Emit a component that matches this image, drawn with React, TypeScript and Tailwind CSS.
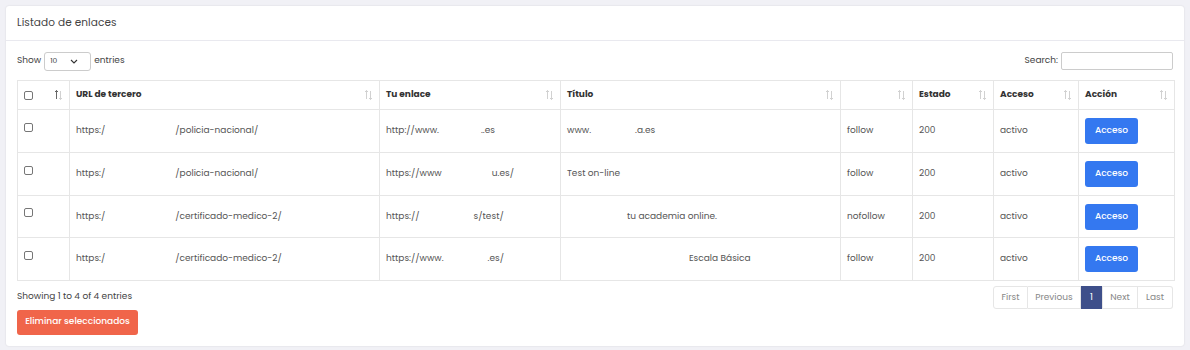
import { useState } from "react";

type Row = {
  url: [string, number, string];
  link: [string, number, string];
  title: [string, number, string];
  rel: string;
};

const rows: Row[] = [
  { url: ["https:/", 70, "/policia-nacional/"], link: ["http://www.", 42, "..es"], title: ["www.", 44, ".a.es"], rel: "follow" },
  { url: ["https:/", 70, "/policia-nacional/"], link: ["https://www", 50, "u.es/"], title: ["Test on-line ", 34, ""], rel: "follow" },
  { url: ["https:/", 70, "/certificado-medico-2/"], link: ["https://", 54, "s/test/"], title: ["", 60, "tu academia online."], rel: "nofollow" },
  { url: ["https:/", 70, "/certificado-medico-2/"], link: ["https://www.", 44, ".es/"], title: ["", 122, "Escala Básica"], rel: "follow" },
];

function Sort({ active }: { active?: boolean }) {
  return (
    <svg width="9" height="12" viewBox="0 0 9 12" className="shrink-0">
      <path d="M2.5 10V1.5M1 3L2.5 1.5L4 3" fill="none" stroke={active ? "#555" : "#ccc"} strokeWidth="0.9" />
      <path d="M6.5 2V10.5M5 9L6.5 10.5L8 9" fill="none" stroke="#ccc" strokeWidth="0.9" />
    </svg>
  );
}

function Gap({ w }: { w: number }) {
  return <span className="inline-block" style={{ width: w }} />;
}

function Box() {
  return <span className="inline-block w-[9px] h-[9px] border border-[#767676] rounded-[2px] bg-white" />;
}

export default function App() {
  const [search, setSearch] = useState<string>("");

  return (
    <main className="w-[1190px] h-[350px] bg-[#f1f1f6] p-[6px] font-['Poppins','Inter',sans-serif] text-[#555]">
      <section className="bg-white rounded-[3px] shadow-[0_0_2px_rgba(0,0,0,0.12)] h-[340px] flex flex-col">
        <div className="h-[35px] border-b border-[#e9e9ef] px-[11px] flex items-center">
          <h1 className="text-[10.5px] text-[#444] tracking-[0.1px]">Listado de enlaces</h1>
        </div>

        <div className="px-[11px] pt-[10px] flex flex-col">
          <div className="flex items-center justify-between h-[20px]">
            <div className="flex items-center gap-[3px] text-[9px] text-[#444]">
              <span>Show</span>
              <div className="w-[47px] h-[19px] border border-[#ccc] rounded-[3px] flex items-center justify-between pl-[5px] pr-[12px] text-[7.5px]">
                <span>10</span>
                <svg width="8" height="5" viewBox="0 0 8 5"><path d="M1 1L4 4L7 1" fill="none" stroke="#333" strokeWidth="1.1" /></svg>
              </div>
              <span>entries</span>
            </div>
            <div className="flex items-center gap-[3px] text-[9px] text-[#444]">
              <span>Search:</span>
              <input
                value={search}
                onChange={(e) => setSearch(e.target.value)}
                className="w-[112px] h-[18px] border border-[#ccc] rounded-[2px] outline-none"
              />
            </div>
          </div>

          <table className="mt-[9px] w-[1157px] border-collapse text-[9px] table-fixed">
            <colgroup>
              <col className="w-[52px]" />
              <col className="w-[310px]" />
              <col className="w-[181px]" />
              <col className="w-[280px]" />
              <col className="w-[72px]" />
              <col className="w-[81px]" />
              <col className="w-[85px]" />
              <col className="w-[96px]" />
            </colgroup>
            <thead>
              <tr className="h-[29px] text-[#333] font-semibold">
                <th className="border border-[#e6e6e6] px-[6px] text-left">
                  <div className="flex items-center justify-between"><Box /><Sort active /></div>
                </th>
                {["URL de tercero", "Tu enlace", "Título", "", "Estado", "Acceso", "Acción"].map((h, i) => (
                  <th key={i} className="border border-[#e6e6e6] px-[6px] text-left">
                    <div className="flex items-center justify-between"><span>{h}</span><Sort /></div>
                  </th>
                ))}
              </tr>
            </thead>
            <tbody>
              {rows.map((r, i) => (
                <tr key={i} className={i === 2 ? "h-[42px]" : "h-[43px]"}>
                  <td className="border border-[#e6e6e6] px-[6px] align-middle"><div className="-mt-[3px]"><Box /></div></td>
                  <td className="border border-[#e6e6e6] px-[6px] whitespace-nowrap">{r.url[0]}<Gap w={r.url[1]} />{r.url[2]}</td>
                  <td className="border border-[#e6e6e6] px-[6px] whitespace-nowrap">{r.link[0]}<Gap w={r.link[1]} />{r.link[2]}</td>
                  <td className="border border-[#e6e6e6] px-[6px] whitespace-nowrap">{r.title[0]}<Gap w={r.title[1]} />{r.title[2]}</td>
                  <td className="border border-[#e6e6e6] px-[6px]">{r.rel}</td>
                  <td className="border border-[#e6e6e6] px-[6px]">200</td>
                  <td className="border border-[#e6e6e6] px-[6px]">activo</td>
                  <td className="border border-[#e6e6e6] px-[6px]">
                    <button className="w-[53px] h-[26px] bg-[#3478f0] text-white rounded-[3px] text-[9px] font-medium">Acceso</button>
                  </td>
                </tr>
              ))}
            </tbody>
          </table>

          <div className="flex justify-between items-start mt-[5px]">
            <div className="flex flex-col">
              <span className="text-[9px] text-[#444] mt-[4px]">Showing 1 to 4 of 4 entries</span>
              <button className="mt-[6px] w-[121px] h-[25px] bg-[#f0654a] text-white rounded-[3px] text-[9px] font-medium">Eliminar seleccionados</button>
            </div>
            <div className="flex text-[9px] text-[#888] h-[23px]">
              <span className="w-[35px] flex items-center justify-center border border-[#e6e6e6] rounded-l-[3px]">First</span>
              <span className="w-[53px] flex items-center justify-center border-y border-r border-[#e6e6e6]">Previous</span>
              <span className="w-[21px] flex items-center justify-center bg-[#3e4f8a] text-white">1</span>
              <span className="w-[36px] flex items-center justify-center border border-[#e6e6e6]">Next</span>
              <span className="w-[35px] flex items-center justify-center border-y border-r border-[#e6e6e6] rounded-r-[3px]">Last</span>
            </div>
          </div>
        </div>
      </section>
    </main>
  );
}
